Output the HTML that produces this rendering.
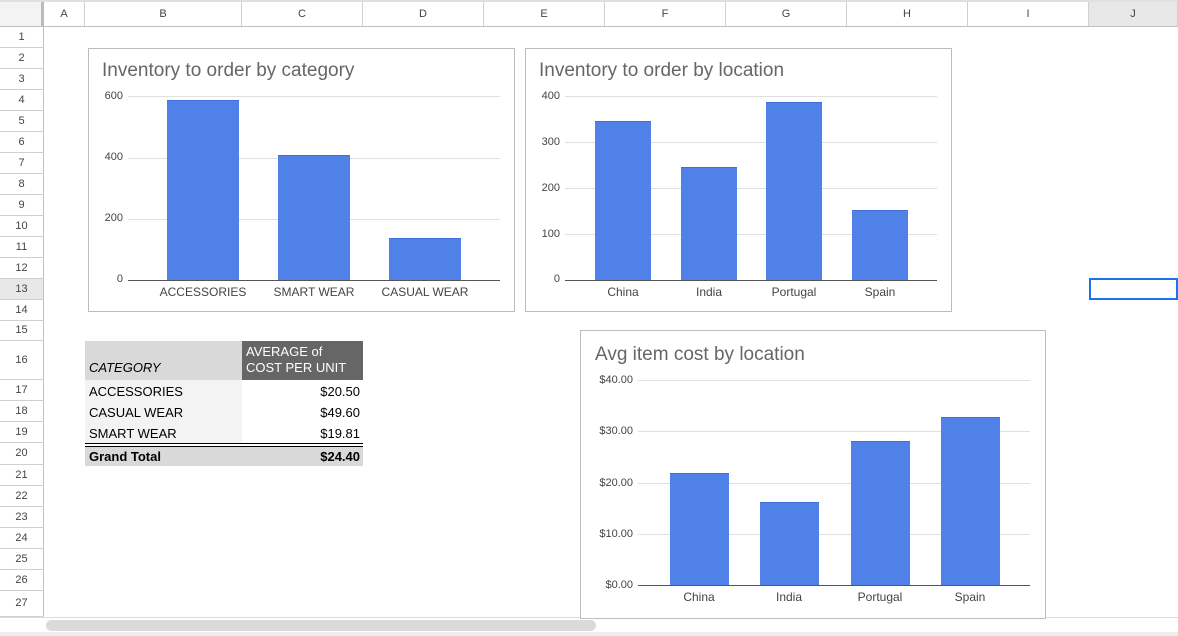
<!DOCTYPE html>
<html><head><meta charset="utf-8"><style>
*{margin:0;padding:0;box-sizing:border-box}
body{width:1178px;height:636px;overflow:hidden;background:#fff;font-family:"Liberation Sans",Arial,sans-serif;position:relative}
.a{position:absolute}
.ch{position:absolute;top:2px;height:24px;border-right:1px solid #d0d0d0;font-size:11px;color:#444;text-align:center;line-height:24px;background:#fff}
.rh{position:absolute;left:0;width:44px;border-bottom:1px solid #d0d0d0;font-size:11px;color:#444;text-align:center;background:#fff;border-right:1px solid #c0c0c0}
.box{position:absolute;border:1px solid #bdbdbd;background:#fff}
.t{position:absolute;font-size:19px;color:#666}
.g{position:absolute;height:1px;background:#e0e0e0}
.bl{position:absolute;height:1px;background:#555}
.y{position:absolute;font-size:11px;color:#444;text-align:right;width:40px}
.x{position:absolute;font-size:12px;color:#444;text-align:center;width:120px}
.b{position:absolute;background:#4f81e9;border-top:1px solid #3e6fd8}
.c{position:absolute;font-size:13px;color:#000}
</style></head><body>
<div class="a" style="left:0;top:0;width:1178px;height:2px;background:#e0e0e0"></div>
<div class="a" style="left:0;top:26px;width:1178px;height:1px;background:#c0c0c0"></div>
<div class="ch" style="left:0;width:44px;background:#f3f3f3;border-right:3px solid #bbb"></div>
<div class="ch" style="left:44px;width:41px">A</div>
<div class="ch" style="left:85px;width:157px">B</div>
<div class="ch" style="left:242px;width:121px">C</div>
<div class="ch" style="left:363px;width:121px">D</div>
<div class="ch" style="left:484px;width:121px">E</div>
<div class="ch" style="left:605px;width:121px">F</div>
<div class="ch" style="left:726px;width:121px">G</div>
<div class="ch" style="left:847px;width:121px">H</div>
<div class="ch" style="left:968px;width:121px">I</div>
<div class="ch" style="left:1089px;width:89px;background:#e8e8e8">J</div>

<div class="rh" style="top:27px;height:21px;line-height:20px">1</div>
<div class="rh" style="top:48px;height:21px;line-height:20px">2</div>
<div class="rh" style="top:69px;height:21px;line-height:20px">3</div>
<div class="rh" style="top:90px;height:21px;line-height:20px">4</div>
<div class="rh" style="top:111px;height:21px;line-height:20px">5</div>
<div class="rh" style="top:132px;height:21px;line-height:20px">6</div>
<div class="rh" style="top:153px;height:21px;line-height:20px">7</div>
<div class="rh" style="top:174px;height:21px;line-height:20px">8</div>
<div class="rh" style="top:195px;height:21px;line-height:20px">9</div>
<div class="rh" style="top:216px;height:21px;line-height:20px">10</div>
<div class="rh" style="top:237px;height:21px;line-height:20px">11</div>
<div class="rh" style="top:258px;height:21px;line-height:20px">12</div>
<div class="rh" style="top:279px;height:21px;line-height:20px;background:#e8e8e8">13</div>
<div class="rh" style="top:300px;height:21px;line-height:20px">14</div>
<div class="rh" style="top:321px;height:20px;line-height:19px">15</div>
<div class="rh" style="top:341px;height:39px;line-height:38px">16</div>
<div class="rh" style="top:380px;height:21px;line-height:20px">17</div>
<div class="rh" style="top:401px;height:21px;line-height:20px">18</div>
<div class="rh" style="top:422px;height:21px;line-height:20px">19</div>
<div class="rh" style="top:443px;height:22px;line-height:21px">20</div>
<div class="rh" style="top:465px;height:21px;line-height:20px">21</div>
<div class="rh" style="top:486px;height:21px;line-height:20px">22</div>
<div class="rh" style="top:507px;height:21px;line-height:20px">23</div>
<div class="rh" style="top:528px;height:21px;line-height:20px">24</div>
<div class="rh" style="top:549px;height:21px;line-height:20px">25</div>
<div class="rh" style="top:570px;height:21px;line-height:20px">26</div>
<div class="rh" style="top:591px;height:26px;line-height:24px">27</div>

<div class="a" style="left:0;top:617px;width:1178px;height:1px;background:#ddd"></div>
<div class="a" style="left:46px;top:620px;width:550px;height:11px;border-radius:6px;background:#dadada"></div>
<div class="a" style="left:0;top:632px;width:1178px;height:4px;background:#eee"></div>

<div class="a" style="left:1089px;top:278px;width:89px;height:22px;border:2px solid #1a73e8"></div>

<!-- chart 1 -->
<div class="box" style="left:88px;top:48px;width:427px;height:264px"></div>
<div class="t" style="left:102px;top:60px">Inventory to order by category</div>
<div class="y" style="left:83px;top:90px">600</div>
<div class="y" style="left:83px;top:151px">400</div>
<div class="y" style="left:83px;top:212px">200</div>
<div class="y" style="left:83px;top:273px">0</div>
<div class="g" style="left:128px;top:96px;width:372px"></div>
<div class="g" style="left:128px;top:158px;width:372px"></div>
<div class="g" style="left:128px;top:219px;width:372px"></div>
<div class="b" style="left:167px;top:100px;width:72px;height:180px"></div>
<div class="b" style="left:278px;top:155px;width:72px;height:125px"></div>
<div class="b" style="left:389px;top:238px;width:72px;height:42px"></div>
<div class="bl" style="left:128px;top:280px;width:372px"></div>
<div class="x" style="left:143px;top:285px">ACCESSORIES</div>
<div class="x" style="left:254px;top:285px">SMART WEAR</div>
<div class="x" style="left:365px;top:285px">CASUAL WEAR</div>

<!-- chart 2 -->
<div class="box" style="left:525px;top:48px;width:427px;height:264px"></div>
<div class="t" style="left:539px;top:60px">Inventory to order by location</div>
<div class="y" style="left:520px;top:90px">400</div>
<div class="y" style="left:520px;top:136px">300</div>
<div class="y" style="left:520px;top:182px">200</div>
<div class="y" style="left:520px;top:228px">100</div>
<div class="y" style="left:520px;top:273px">0</div>
<div class="g" style="left:565px;top:96px;width:372px"></div>
<div class="g" style="left:565px;top:142px;width:372px"></div>
<div class="g" style="left:565px;top:188px;width:372px"></div>
<div class="g" style="left:565px;top:234px;width:372px"></div>
<div class="b" style="left:595px;top:121px;width:56px;height:159px"></div>
<div class="b" style="left:681px;top:167px;width:56px;height:113px"></div>
<div class="b" style="left:766px;top:102px;width:56px;height:178px"></div>
<div class="b" style="left:852px;top:210px;width:56px;height:70px"></div>
<div class="bl" style="left:565px;top:280px;width:372px"></div>
<div class="x" style="left:563px;top:285px">China</div>
<div class="x" style="left:649px;top:285px">India</div>
<div class="x" style="left:734px;top:285px">Portugal</div>
<div class="x" style="left:820px;top:285px">Spain</div>

<!-- chart 3 -->
<div class="box" style="left:580px;top:330px;width:466px;height:289px"></div>
<div class="t" style="left:595px;top:344px">Avg item cost by location</div>
<div class="y" style="left:593px;top:374px">$40.00</div>
<div class="y" style="left:593px;top:425px">$30.00</div>
<div class="y" style="left:593px;top:477px">$20.00</div>
<div class="y" style="left:593px;top:528px">$10.00</div>
<div class="y" style="left:593px;top:579px">$0.00</div>
<div class="g" style="left:638px;top:380px;width:392px"></div>
<div class="g" style="left:638px;top:431px;width:392px"></div>
<div class="g" style="left:638px;top:483px;width:392px"></div>
<div class="g" style="left:638px;top:534px;width:392px"></div>
<div class="b" style="left:670px;top:473px;width:59px;height:112px"></div>
<div class="b" style="left:760px;top:502px;width:59px;height:83px"></div>
<div class="b" style="left:851px;top:441px;width:59px;height:144px"></div>
<div class="b" style="left:941px;top:417px;width:59px;height:168px"></div>
<div class="bl" style="left:638px;top:585px;width:392px"></div>
<div class="x" style="left:639px;top:590px">China</div>
<div class="x" style="left:729px;top:590px">India</div>
<div class="x" style="left:820px;top:590px">Portugal</div>
<div class="x" style="left:910px;top:590px">Spain</div>

<!-- pivot -->
<div class="a" style="left:85px;top:341px;width:157px;height:39px;background:#d9d9d9"></div>
<div class="a" style="left:242px;top:341px;width:121px;height:39px;background:#666"></div>
<div class="c" style="left:89px;top:360px;font-style:italic">CATEGORY</div>
<div class="c" style="left:246px;top:344px;color:#fff;line-height:16px">AVERAGE of<br>COST PER UNIT</div>
<div class="a" style="left:85px;top:380px;width:157px;height:63px;background:#f3f3f3"></div>
<div class="c" style="left:89px;top:384px">ACCESSORIES</div>
<div class="c" style="left:89px;top:405px">CASUAL WEAR</div>
<div class="c" style="left:89px;top:426px">SMART WEAR</div>
<div class="c" style="left:300px;width:60px;text-align:right;top:384px">$20.50</div>
<div class="c" style="left:300px;width:60px;text-align:right;top:405px">$49.60</div>
<div class="c" style="left:300px;width:60px;text-align:right;top:426px">$19.81</div>
<div class="a" style="left:85px;top:443px;width:278px;height:4px;border-top:1px solid #000;border-bottom:1px solid #000"></div>
<div class="a" style="left:85px;top:447px;width:278px;height:19px;background:#d9d9d9"></div>
<div class="c" style="left:89px;top:449px;font-weight:bold">Grand Total</div>
<div class="c" style="left:300px;width:60px;text-align:right;top:449px;font-weight:bold">$24.40</div>
</body></html>
